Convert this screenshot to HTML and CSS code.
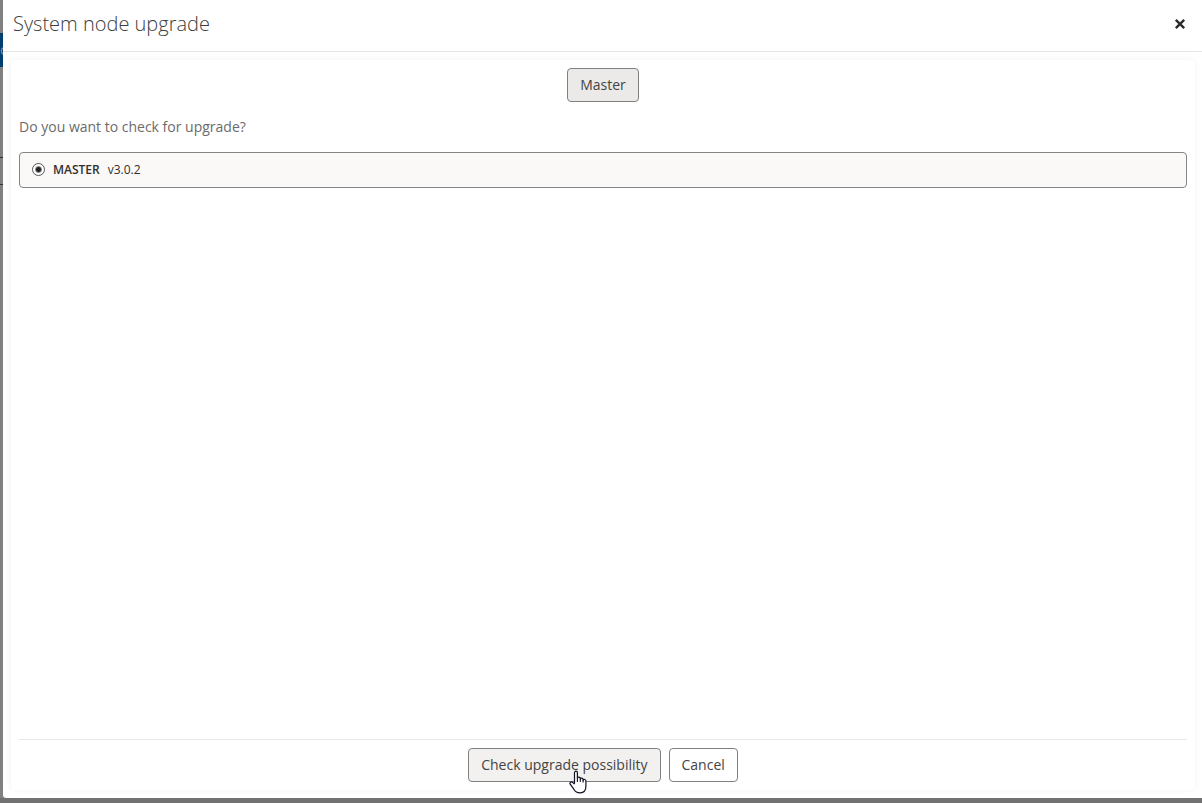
FILE: index.html
```html
<!DOCTYPE html>
<html lang="en">

<head>
    <meta charset="UTF-8">
    <meta name="viewport" content="width=device-width, initial-scale=1.0">
    <title>System node upgrade</title>
    <link rel="stylesheet" href="styles.css">
</head>

<body>
    <!-- page left visible behind the dialog -->
    <div class="page-edge">
        <div class="edge-menu">c</div>
        <div class="edge-row"></div>
    </div>
    <div class="dialog" role="dialog" aria-labelledby="dialog-title">
        <header class="dialog-header">
            <h1 id="dialog-title">System node upgrade</h1>
            <button type="button" class="close" aria-label="Close">
                <svg width="12" height="12" viewBox="0 0 12 12">
                    <path d="M1.8 1.8L10.2 10.2M10.2 1.8L1.8 10.2" stroke="#2b2b2b" stroke-width="2.4" fill="none" />
                </svg>
            </button>
        </header>
        <form class="panel">
            <div class="steps">
                <button type="button" class="btn btn-active">Master</button>
            </div>
            <p class="question">Do you want to check for upgrade?</p>
            <label class="node">
                <input type="radio" name="node" value="master" checked>
                <span class="node-name">MASTER</span>
                <span>v3.0.2</span>
            </label>
            <footer class="actions">
                <button type="button" class="btn btn-hover">Check upgrade possibility
                    <svg class="cursor" width="18" height="24" viewBox="0 0 18 24">
                        <path d="M5.5 13.5V2.8C5.5 .6 8.4 .6 8.4 2.8V8C8.6 6.6 11.2 6.7 11.3 8.4V9C11.6 7.7 14.1 7.9 14.1 9.6V10.2C14.5 9 16.9 9.3 16.9 11V16.3C16.9 20.5 14.6 22.8 11 22.8C7.8 22.8 6.2 21.6 4.8 19.2L1.2 14.2C.2 12.4 2.3 11.2 3.6 12.3L5.5 14.2" fill="#fff" stroke="#111122" stroke-width="1.2" stroke-linejoin="round" />
                        <path d="M8.4 7.5V12M11.3 8.5V12M14.1 9.8V12.5" fill="none" stroke="#111122" stroke-width="1.1" />
                    </svg>
                </button>
                <button type="button" class="btn">Cancel</button>
            </footer>
        </form>
    </div>
</body>

</html>
```
FILE: styles.css
```css
* {
    box-sizing: border-box;
    margin: 0;
    padding: 0;
}

body {
    display: flex;
    height: 100vh;
    padding-bottom: 5px;
    overflow: hidden;
    background-color: #717171;
    font-family: "Open Sans", "Noto Sans", sans-serif;
    font-size: 14px;
    color: #3c3c3c;
}

.page-edge {
    width: 3px;
    padding-top: 33px;
    overflow: hidden;
    background-color: #808080;
}

.edge-menu {
    height: 34px;
    line-height: 34px;
    margin-bottom: 90px;
    background-color: #003f70;
    color: #8295a5;
}

.edge-row {
    height: 28px;
    border-top: 1px solid #333;
    border-bottom: 1px solid #333;
}

.dialog {
    flex: 1;
    display: flex;
    flex-direction: column;
    background-color: #fff;
    border-bottom-left-radius: 3px;
}

.dialog-header {
    display: flex;
    align-items: center;
    justify-content: space-between;
    height: 52px;
    padding: 0 13px 4px 10px;
    border-bottom: 1px solid #e4e7e8;
}

h1 {
    font-size: 20px;
    font-weight: 300;
    line-height: 28px;
}

.close {
    width: 18px;
    height: 18px;
    border: none;
    background: none;
    cursor: pointer;
}

.close svg {
    display: block;
    margin: 0 auto;
}

.panel {
    flex: 1;
    display: flex;
    flex-direction: column;
    margin: 8px 7px 8px 8px;
    padding: 8px;
    border-radius: 4px;
    box-shadow: 0 0 6px rgba(0, 0, 0, 0.06);
}

.steps {
    display: flex;
    justify-content: center;
}

.btn {
    position: relative;
    height: 34px;
    padding: 0 12px;
    border: 1px solid #808080;
    border-radius: 4px;
    background-color: #fff;
    font-family: inherit;
    font-size: 14px;
    line-height: 20px;
    color: #444;
    cursor: pointer;
}

.btn-active {
    background-color: #ebeae8;
}

.btn-hover {
    background-color: #f2f1ef;
}

.question {
    margin: 15px 0;
    line-height: 20px;
    color: #6b6b6b;
}

.node {
    display: flex;
    align-items: center;
    gap: 8px;
    height: 36px;
    padding: 0 12px 2px;
    border: 1px solid #858585;
    border-radius: 4px;
    background-color: #faf9f7;
    font-size: 12px;
    color: #303030;
}

.node input {
    appearance: none;
    width: 13px;
    height: 13px;
    border: 1px solid #555;
    border-radius: 50%;
    background: radial-gradient(circle, #222 2px, #fff 4px);
}

.node-name {
    font-weight: 600;
}

.actions {
    display: flex;
    justify-content: center;
    gap: 8px;
    margin-top: auto;
    padding-top: 8px;
    border-top: 1px solid #e8e8e8;
}

.cursor {
    position: absolute;
    top: 21px;
    left: 100px;
}
```
